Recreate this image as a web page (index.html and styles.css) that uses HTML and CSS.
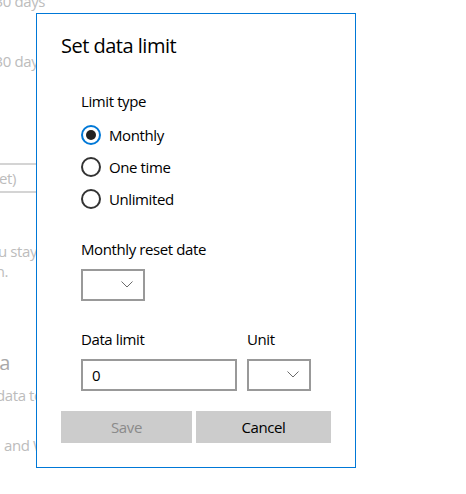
FILE: index.html
```html
<!DOCTYPE html>
<html lang="en">
<head>
<meta charset="utf-8">
<title>Set data limit</title>
<link rel="stylesheet" href="styles.css">
</head>
<body>
<div class="page">
  <div class="bg-line bg-right bg-days1">Last 30 days</div>
  <div class="bg-line bg-right bg-days2">Last 30 days</div>
  <div class="bg-box"><span class="bg-box-text">(Not set)</span></div>
  <div class="bg-line bg-right bg-stay">If you stay</div>
  <div class="bg-line bg-right bg-on">on.</div>
  <div class="bg-heading">Roaming data</div>
  <div class="bg-line bg-data">data to</div>
  <div class="bg-line bg-and">and Wi-Fi</div>
</div>

<div class="dialog">
  <h1 class="title">Set data limit</h1>
  <div class="form">
    <div class="label label-first">Limit type</div>
    <div class="radios">
      <div class="radio checked"><span class="circle"></span><span class="radio-text">Monthly</span></div>
      <div class="radio"><span class="circle"></span><span class="radio-text">One time</span></div>
      <div class="radio"><span class="circle"></span><span class="radio-text">Unlimited</span></div>
    </div>
    <div class="label label-reset">Monthly reset date</div>
    <div class="select">
      <svg class="chev" width="12" height="7" viewBox="0 0 12 7"><polyline points="0.5,0.5 6,6 11.5,0.5" fill="none" stroke="#6b6b6b" stroke-width="1"/></svg>
    </div>
    <div class="limit-row">
      <div class="limit-col">
        <div class="label">Data limit</div>
        <div class="textbox">0</div>
      </div>
      <div class="unit-col">
        <div class="label">Unit</div>
        <div class="select">
          <svg class="chev" width="12" height="7" viewBox="0 0 12 7"><polyline points="0.5,0.5 6,6 11.5,0.5" fill="none" stroke="#6b6b6b" stroke-width="1"/></svg>
        </div>
      </div>
    </div>
  </div>
  <div class="buttons">
    <div class="btn btn-save">Save</div>
    <div class="btn btn-cancel">Cancel</div>
  </div>
</div>
</body>
</html>
```

FILE: styles.css
```css
html, body {
  margin: 0;
  padding: 0;
  background: #ffffff;
  overflow: hidden;
}
body {
  width: 466px;
  height: 494px;
  position: relative;
  font-family: "Open Sans", "Noto Sans", sans-serif;
  font-size: 15px;
  letter-spacing: -0.4px;
  color: #000;
}

/* background page (dimmed, behind the dialog) */
.page {
  width: 36px;
  color: #bcbcbc;
  white-space: nowrap;
}
.bg-line {
  line-height: 20px;
  height: 20px;
}
.bg-right {
  margin-left: -200px;
  text-align: right;
}
.bg-days1 { margin-top: -9px; width: 245px; }
.bg-days2 { margin-top: 40px; width: 245px; }
.bg-box {
  margin-top: 92px;
  margin-left: -100px;
  width: 136px;
  height: 26px;
  border-top: 2px solid #d4d4d4;
  border-bottom: 2px solid #d4d4d4;
  line-height: 26px;
  text-align: right;
}
.bg-box-text { margin-right: 20px; }
.bg-stay { margin-top: 48px; width: 237px; }
.bg-on { margin-top: 0; width: 208px; }
.bg-heading {
  margin-top: 68px;
  margin-left: -200px;
  width: 210px;
  text-align: right;
  font-size: 20px;
  line-height: 28px;
  color: #a8a8a8;
}
.bg-data { margin-top: 8px; margin-left: -4px; }
.bg-and { margin-top: 30px; margin-left: 4px; }

/* dialog */
.dialog {
  position: absolute;
  left: 36px;
  top: 13px;
  width: 269px;
  height: 453px;
  border: 1px solid #0078d7;
  background: #fff;
  padding: 0 25px 0 24px;
}
.title {
  margin: 18px 0 0 0;
  font-size: 20px;
  line-height: 28px;
  font-weight: normal;
  letter-spacing: -0.5px;
}
.form {
  padding-left: 20px;
}
.label {
  line-height: 20px;
  height: 20px;
}
.label-first { margin-top: 31px; }
.radios {
  margin-top: 8px;
  display: flex;
  flex-direction: column;
}
.radio {
  height: 32px;
  display: flex;
  align-items: center;
  gap: 8px;
}
.circle {
  width: 16px;
  height: 16px;
  border: 2px solid #333;
  border-radius: 50%;
  display: flex;
  align-items: center;
  justify-content: center;
}
.radio.checked .circle { border-color: #0078d7; }
.radio.checked .circle::after {
  content: "";
  width: 10px;
  height: 10px;
  border-radius: 50%;
  background: #222;
}
.radio-text { line-height: 20px; }
.label-reset { margin-top: 24px; }
.select {
  margin-top: 10px;
  width: 60px;
  height: 28px;
  border: 2px solid #999;
  display: flex;
  align-items: center;
  justify-content: flex-end;
}
.chev { margin-right: 10px; margin-top: -2px; }
.limit-row {
  margin-top: 28px;
  display: flex;
  gap: 10px;
}
.limit-col { width: 156px; }
.textbox {
  margin-top: 10px;
  height: 28px;
  border: 2px solid #999;
  line-height: 28px;
  padding-left: 9px;
}
.buttons {
  margin-top: 20px;
  display: grid;
  grid-template-columns: 131px 135px;
  gap: 4px;
}
.btn {
  height: 32px;
  line-height: 32px;
  text-align: center;
  background: #cccccc;
}
.btn-save { color: #8a8a8a; }
.btn-cancel { color: #000; }
```
